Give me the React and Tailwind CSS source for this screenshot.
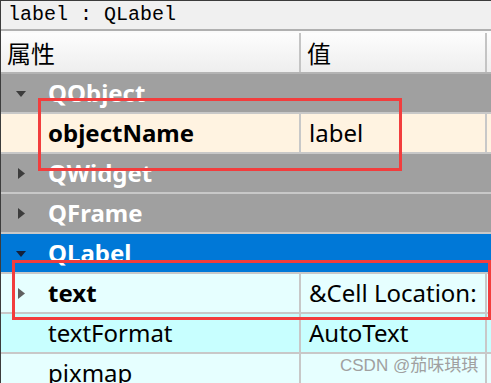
import React from "react";

const ui = { fontFamily: '"Noto Sans", "Open Sans", "Noto Sans CJK SC", sans-serif' };

function TriDown({ color }) {
  return (
    <svg width="10" height="6" viewBox="0 0 10 6" className="block ml-[15px] mt-[2px]">
      <path d="M0 0 L10 0 L5 6 Z" fill={color} />
    </svg>
  );
}

function TriRight({ color }) {
  return (
    <svg width="7" height="11" viewBox="0 0 7 11" className="block ml-[17px]">
      <path d="M0 0 L7 5.5 L0 11 Z" fill={color} />
    </svg>
  );
}

function GroupRow({ label, open, blue }) {
  return (
    <div
      className={`h-[40px] border-b-2 border-[#c8c8c8] flex items-center ${
        blue ? "bg-[#0078d7]" : "bg-[#a0a0a0]"
      }`}
    >
      <div className="w-[47px] flex items-center">
        {open ? <TriDown color={blue ? "#14213a" : "#3c3c3c"} /> : <TriRight color="#3c3c3c" />}
      </div>
      <span className="text-[24px] font-bold text-white leading-none">{label}</span>
    </div>
  );
}

function PropRow({ name, value, bg, bold, expand }) {
  return (
    <div className={`h-[40px] border-b-2 border-[#c8c8c8] flex ${bg}`}>
      <div className="w-[300px] flex items-center border-r-2 border-[#c8c8c8]">
        <div className="w-[47px] flex items-center">
          {expand && <TriRight color="#606060" />}
        </div>
        <span className={`text-[24px] text-black leading-none ${bold ? "font-bold" : ""}`}>{name}</span>
      </div>
      <div className="w-[186px] flex items-center pl-[8px] border-r-2 border-[#c8c8c8] overflow-hidden whitespace-nowrap">
        <span className="text-[24px] text-black leading-none">{value}</span>
      </div>
    </div>
  );
}

export default function App() {
  return (
    <div className="w-[491px] h-[383px] overflow-hidden relative bg-white border-l border-t border-[#3c3c3c]" style={ui}>
      {/* title */}
      <div className="h-[30px] bg-[#f0f0f0] border-b-2 border-[#b0b0b0] flex items-center pl-[7px]">
        <span className="text-[20px] text-black leading-none" style={{ fontFamily: '"Liberation Mono", monospace' }}>
          label : QLabel
        </span>
      </div>

      {/* header */}
      <div className="h-[43px] flex bg-gradient-to-b from-[#fdfdfd] to-[#eeeeee] border-t-2 border-t-[#fafafa] border-b-2 border-b-[#b4b4b4]">
        <div className="w-[300px] flex items-center pl-[6px] border-r-2 border-[#c4c4c4]">
          <span className="text-[24px] text-black leading-none" style={{ fontFamily: '"Noto Sans CJK SC", sans-serif' }}>属性</span>
        </div>
        <div className="w-[186px] flex items-center pl-[6px] border-r-2 border-[#c4c4c4]">
          <span className="text-[24px] text-black leading-none" style={{ fontFamily: '"Noto Sans CJK SC", sans-serif' }}>值</span>
        </div>
      </div>

      {/* rows */}
      <GroupRow label="QObject" open />
      <PropRow name="objectName" value="label" bg="bg-[#fff3e1]" bold />
      <GroupRow label="QWidget" />
      <GroupRow label="QFrame" />
      <GroupRow label="QLabel" open blue />
      <PropRow name="text" value="&Cell Location:" bg="bg-[#e6ffff]" bold expand />
      <PropRow name="textFormat" value="AutoText" bg="bg-[#c8ffff]" />
      <PropRow name="pixmap" value="" bg="bg-[#e6ffff]" />

      {/* annotation boxes */}
      <div className="absolute left-[37px] top-[97px] w-[364px] h-[73px] border-[3px] border-[#f23d3d]" />
      <div className="absolute left-[11px] top-[259px] w-[479px] h-[60px] border-[3px] border-[#f23d3d]" />

      {/* watermark */}
      <div
        className="absolute left-[339px] top-[356px] text-[17px] text-[#a0a0a0] leading-none"
        style={{ fontFamily: '"Liberation Sans", "Noto Sans CJK SC", sans-serif' }}
      >
        CSDN @茄味琪琪
      </div>
    </div>
  );
}
